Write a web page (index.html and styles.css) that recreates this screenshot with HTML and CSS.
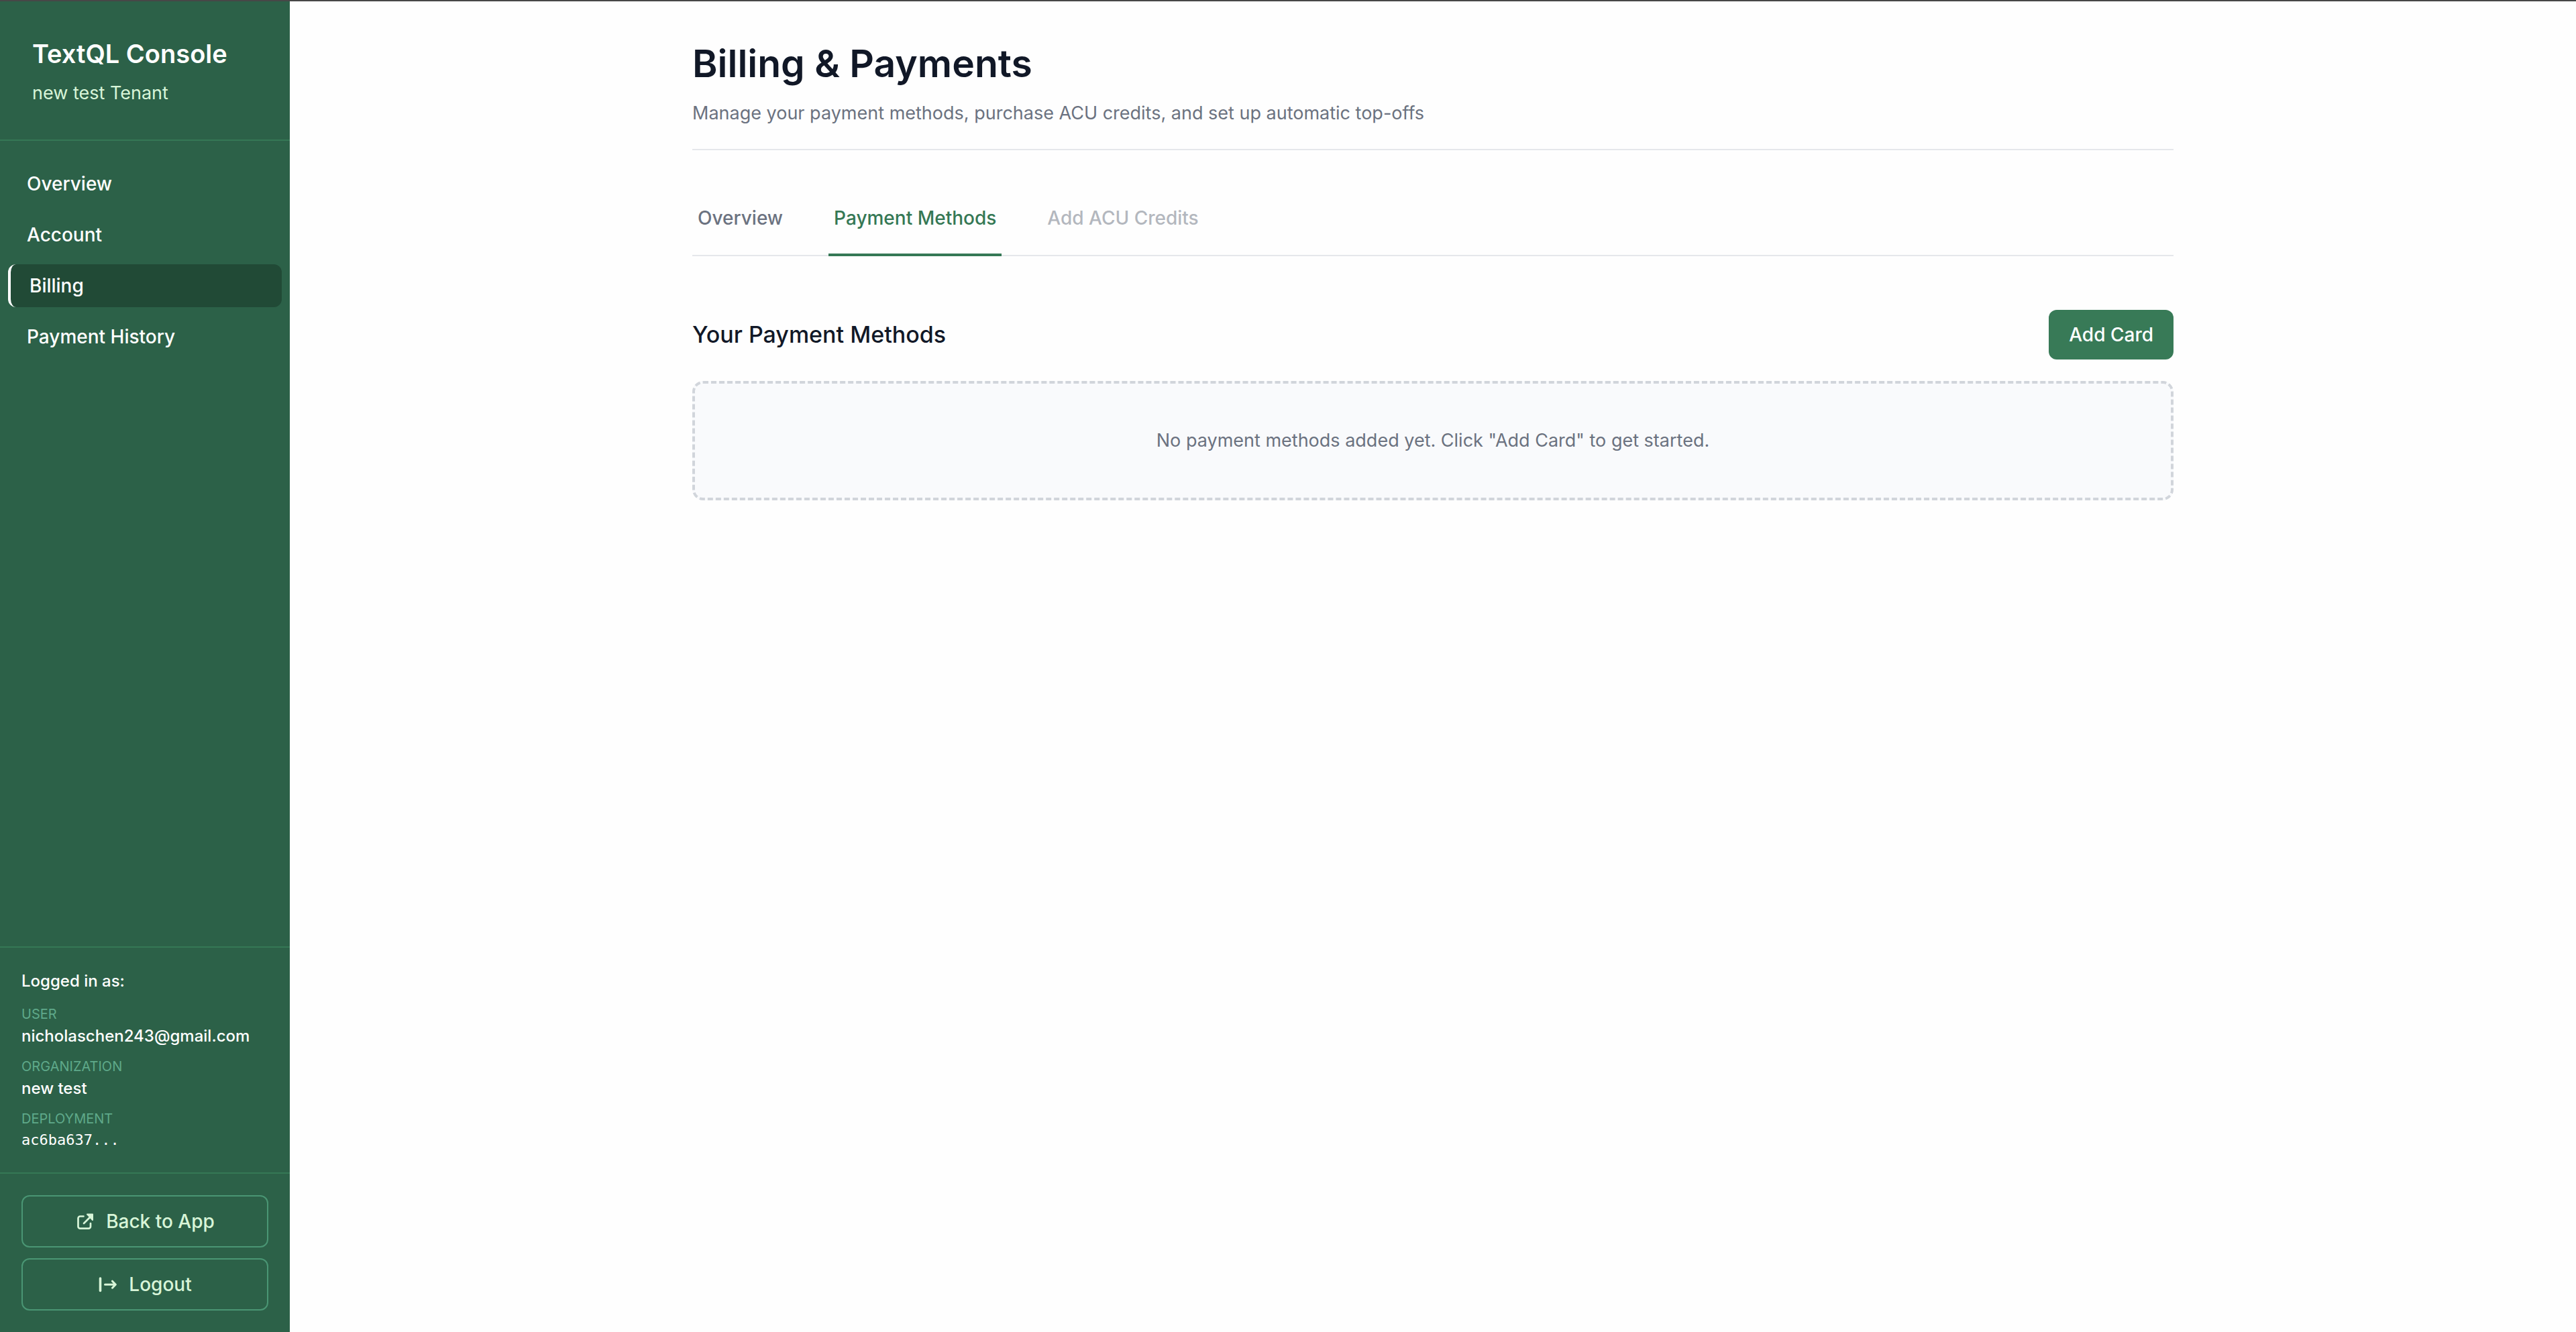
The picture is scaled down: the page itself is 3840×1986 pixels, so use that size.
FILE: index.html
```html
<!DOCTYPE html>
<html lang="en">
<head>
  <meta charset="UTF-8">
  <meta name="viewport" content="width=device-width, initial-scale=1.0">
  <title>Billing &amp; Payments</title>
  <link rel="stylesheet" href="styles.css">
</head>
<body>
  <div class="layout">
    <!-- Sidebar -->
    <aside class="sidebar">
      <div class="sidebar-header">
        <h2>TextQL Console</h2>
        <p>new test Tenant</p>
      </div>

      <nav class="sidebar-nav">
        <a href="#overview">Overview</a>
        <a href="#account">Account</a>
        <a href="#billing" class="active">Billing</a>
        <a href="#history">Payment History</a>
      </nav>

      <div class="user-info">
        <p class="user-title">Logged in as:</p>
        <dl>
          <dt>USER</dt>
          <dd>nicholaschen243@gmail.com</dd>
          <dt>ORGANIZATION</dt>
          <dd>new test</dd>
          <dt>DEPLOYMENT</dt>
          <dd class="mono">ac6ba637...</dd>
        </dl>
      </div>

      <div class="sidebar-actions">
        <button type="button" class="btn-outline">
          <svg viewBox="0 0 28 28" fill="none" stroke="currentColor" stroke-width="2.7" stroke-linecap="round" stroke-linejoin="round">
            <path d="M12.500 6.500H7.500a3 3 0 0 0-3 3v12.200a3 3 0 0 0 3 3h12.500a3 3 0 0 0 3-3V17"/>
            <path d="M13 17L24.500 5.500"/>
            <path d="M18 3.500h8V12L22.500 8z" fill="currentColor" stroke-width="2"/>
          </svg>
          Back to App
        </button>
        <button type="button" class="btn-outline">
          <svg viewBox="0 0 28 28" fill="none" stroke="currentColor" stroke-width="3" stroke-linecap="round" stroke-linejoin="round">
            <path d="M3.500 5v18.500" stroke-width="3.6"/>
            <path d="M10.500 14.200H26M21.500 9.200l4.800 5-4.800 5"/>
          </svg>
          Logout
        </button>
      </div>
    </aside>

    <!-- Main content -->
    <main class="content">
      <div class="container">
        <header class="page-header">
          <h1>Billing &amp; Payments</h1>
          <p>Manage your payment methods, purchase ACU credits, and set up automatic top-offs</p>
        </header>

        <div class="tabs">
          <button type="button" class="tab">Overview</button>
          <button type="button" class="tab active">Payment Methods</button>
          <button type="button" class="tab" disabled>Add ACU Credits</button>
        </div>

        <section>
          <div class="section-header">
            <h3>Your Payment Methods</h3>
            <button type="button" class="btn-primary">Add Card</button>
          </div>
          <div class="empty-state">
            <p>No payment methods added yet. Click "Add Card" to get started.</p>
          </div>
        </section>
      </div>
    </main>
  </div>
</body>
</html>
```

FILE: styles.css
```css
* {
  box-sizing: border-box;
  margin: 0;
  padding: 0;
}

body {
  font-family: Inter, "Liberation Sans", sans-serif;
  font-size: 27px;
  line-height: 42px;
  color: #111827;
  background-color: #fefefe;
  border-top: 2px solid #474747;
}

button {
  font-family: inherit;
  font-size: 28px;
  line-height: 42px;
  font-weight: 500;
  cursor: pointer;
}

.layout {
  display: flex;
  min-height: calc(100vh - 2px);
}

/* Sidebar */
.sidebar {
  display: flex;
  flex-direction: column;
  flex: 0 0 432px;
  background-color: #2c6148;
  color: #fff;
}

.sidebar-header {
  padding: 48px;
  border-bottom: 2px solid #357855;
}

.sidebar-header h2 {
  font-size: 38px;
  line-height: 60px;
  font-weight: 600;
}

.sidebar-header p {
  margin-top: 8px;
  color: #d8f5d8;
}

.sidebar-nav {
  display: flex;
  flex-direction: column;
  flex: 1;
  gap: 12px;
  padding: 32px 12px;
}

.sidebar-nav a {
  padding: 11px 28px;
  border-radius: 12px;
  color: #fff;
  font-size: 28px;
  font-weight: 500;
  text-decoration: none;
}

.sidebar-nav a.active {
  background-color: #214a36;
  border-left: 4px solid #fff;
}

.user-info {
  padding: 32px;
  border-top: 2px solid #357855;
  font-size: 24px;
  line-height: 36px;
  font-weight: 500;
}

.user-title {
  margin-bottom: 16px;
}

.user-info dt {
  font-size: 20px;
  line-height: 30px;
  font-weight: 400;
  color: #5fa98a;
}

.user-info dd {
  margin-bottom: 12px;
}

.user-info dd:last-child {
  margin-bottom: 0;
}

.user-info .mono {
  font-family: "DejaVu Sans Mono", monospace;
  font-size: 22px;
  line-height: 33px;
  font-weight: 400;
}

.sidebar-actions {
  display: flex;
  flex-direction: column;
  gap: 16px;
  padding: 32px;
  border-top: 2px solid #357855;
}

.btn-outline {
  display: flex;
  align-items: center;
  justify-content: center;
  gap: 18px;
  padding: 16px 32px;
  background: transparent;
  border: 2px solid #4a9674;
  border-radius: 12px;
  color: #d8f5d8;
}

.btn-outline svg {
  width: 28px;
  height: 28px;
}

/* Main content */
.content {
  flex: 1;
}

.container {
  max-width: 2400px;
  margin: 0 auto;
  padding: 48px 96px;
}

.page-header {
  padding-bottom: 32px;
  border-bottom: 2px solid #e5e7eb;
}

.page-header h1 {
  font-size: 57px;
  line-height: 90px;
  font-weight: 600;
}

.page-header p {
  margin-top: 8px;
  color: #6b7280;
}

.tabs {
  display: flex;
  gap: 60px;
  margin: 64px 0 80px;
  border-bottom: 2px solid #e5e7eb;
}

.tab {
  padding: 16px 8px 32px;
  margin-bottom: -2px;
  background: none;
  border: none;
  border-bottom: 4px solid transparent;
  color: #6b7280;
}

.tab.active {
  color: #357855;
  border-bottom-color: #357855;
}

.tab:disabled {
  opacity: 0.5;
  cursor: not-allowed;
}

.section-header {
  display: flex;
  align-items: center;
  justify-content: space-between;
  margin-bottom: 32px;
}

.section-header h3 {
  font-size: 34px;
  line-height: 54px;
  font-weight: 500;
}

.btn-primary {
  padding: 16px 30px;
  background-color: #387a57;
  border: none;
  border-radius: 12px;
  color: #fff;
}

.empty-state {
  padding: 64px 32px;
  background-color: #f9fafc;
  border: 4px dashed #d1d5db;
  border-radius: 16px;
  color: #6b7280;
  text-align: center;
}
```
